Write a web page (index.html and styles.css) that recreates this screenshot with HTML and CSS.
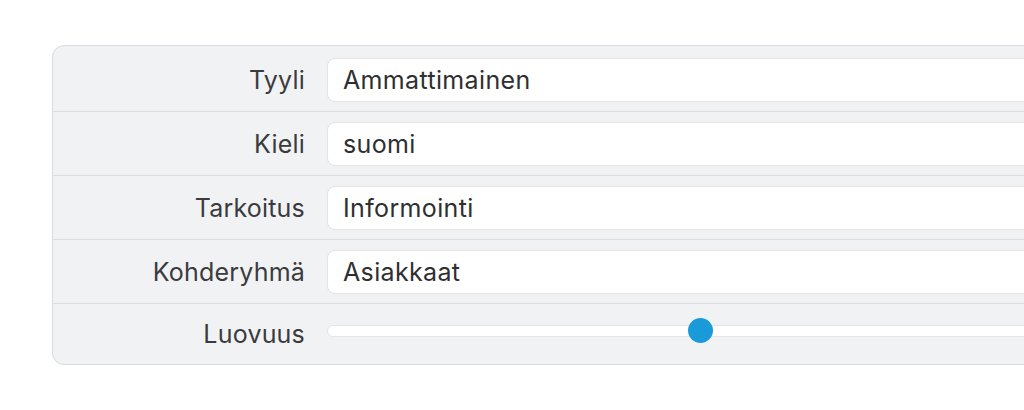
FILE: index.html
```html
<!DOCTYPE html>
<html lang="fi">
<head>
<meta charset="utf-8">
<link rel="stylesheet" href="styles.css">
</head>
<body>
<div class="panel">
  <div class="row">
    <div class="label">Tyyli</div>
    <div class="field">Ammattimainen</div>
  </div>
  <div class="row">
    <div class="label">Kieli</div>
    <div class="field">suomi</div>
  </div>
  <div class="row">
    <div class="label">Tarkoitus</div>
    <div class="field">Informointi</div>
  </div>
  <div class="row">
    <div class="label">Kohderyhmä</div>
    <div class="field">Asiakkaat</div>
  </div>
  <div class="row last">
    <div class="label">Luovuus</div>
    <div class="slider">
      <div class="track"></div>
      <div class="thumb" style="left: 361px"></div>
    </div>
  </div>
</div>
</body>
</html>
```
FILE: styles.css
```css
html, body {
  margin: 0;
  padding: 0;
  background: #ffffff;
  overflow: hidden;
}
body {
  width: 1024px;
  height: 410px;
  font-family: Inter, "Noto Sans", sans-serif;
}
.panel {
  position: relative;
  margin: 45px 0 0 52px;
  width: 1100px;
  box-sizing: border-box;
  background: #f1f2f4;
  border: 1px solid #dadbdf;
  border-radius: 12px;
  padding-top: 2px;
}
.row {
  display: flex;
  align-items: center;
  height: 63px;
  border-bottom: 1px solid #dcdde1;
}
.row.last {
  border-bottom: none;
  height: 60px;
}
.label {
  width: 252px;
  flex: none;
  box-sizing: border-box;
  text-align: right;
  font-size: 25px;
  letter-spacing: 0.2px;
  color: #3b3b3d;
  padding-right: 0;
  margin-right: 22px;
}
.field {
  flex: 1;
  height: 44px;
  box-sizing: border-box;
  background: #ffffff;
  border: 1px solid #e3e4e7;
  border-radius: 8px;
  display: flex;
  align-items: center;
  padding-left: 15px;
  font-size: 25px;
  letter-spacing: 0.35px;
  color: #2f2f31;
}
.slider {
  flex: 1;
  position: relative;
  height: 25px;
  margin-top: -7px;
  display: flex;
  align-items: center;
}
.track {
  width: 100%;
  height: 12px;
  box-sizing: border-box;
  background: #ffffff;
  border: 1px solid #e4e5e8;
  border-radius: 6px;
}
.thumb {
  position: absolute;
  top: 0;
  width: 25px;
  height: 25px;
  border-radius: 50%;
  background: #1a9ad8;
}
```
